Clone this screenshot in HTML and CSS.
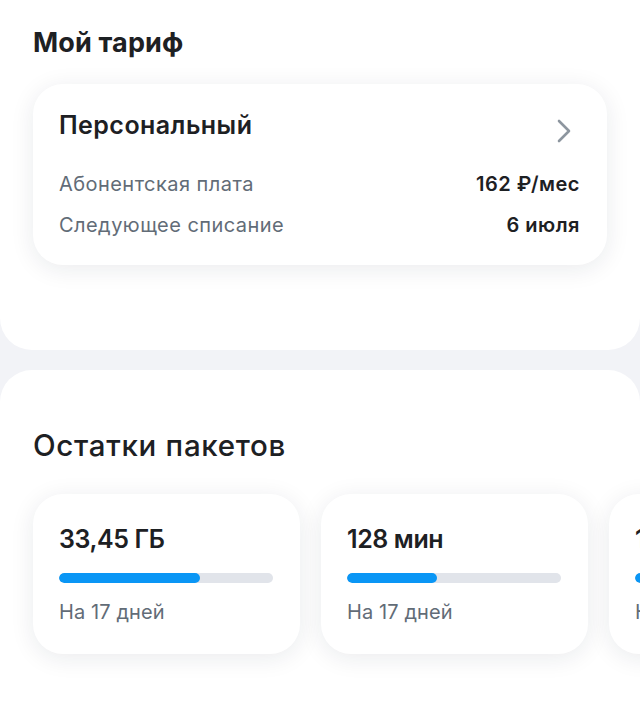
FILE: index.html
```html
<!DOCTYPE html>
<html lang="ru">
<head>
<meta charset="utf-8">
<title>Мой тариф</title>
<link rel="stylesheet" href="styles.css">
</head>
<body>
<section class="panel panel-top">
  <h2 class="heading heading-tariff">Мой тариф</h2>
  <div class="card tariff-card">
    <div class="tariff-head">
      <span class="tariff-name">Персональный</span>
      <svg class="chevron" width="16" height="24" viewBox="0 0 16 24" aria-hidden="true">
        <path d="M3 2 L13 12 L3 22" fill="none" stroke="#8d969f" stroke-width="2.6" stroke-linecap="round" stroke-linejoin="round"/>
      </svg>
    </div>
    <div class="tariff-row">
      <span class="row-label">Абонентская плата</span>
      <span class="row-value">162 ₽/мес</span>
    </div>
    <div class="tariff-row tariff-row-second">
      <span class="row-label">Следующее списание</span>
      <span class="row-value">6 июля</span>
    </div>
  </div>
</section>
<section class="panel panel-bottom">
  <h2 class="heading heading-packages">Остатки пакетов</h2>
  <div class="packages">
    <div class="card package">
      <div class="package-amount">33,45 ГБ</div>
      <div class="bar"><div class="bar-fill" style="width:66%"></div></div>
      <div class="package-term">На 17 дней</div>
    </div>
    <div class="card package">
      <div class="package-amount">128 мин</div>
      <div class="bar"><div class="bar-fill" style="width:42%"></div></div>
      <div class="package-term">На 17 дней</div>
    </div>
    <div class="card package">
      <div class="package-amount">100 SMS</div>
      <div class="bar"><div class="bar-fill" style="width:80%"></div></div>
      <div class="package-term">На 17 дней</div>
    </div>
  </div>
</section>
</body>
</html>
```
FILE: styles.css
```css
* { box-sizing: border-box; }
html, body { margin: 0; padding: 0; }
body {
  background: #f2f3f7;
  font-family: Inter, Roboto, "Noto Sans", "DejaVu Sans", sans-serif;
  color: #1d2023;
  width: 640px;
  min-height: 714px;
  overflow: hidden;
}
.panel {
  background: #ffffff;
  overflow: hidden;
}
.panel-top {
  height: 350px;
  border-radius: 0 0 32px 32px;
  padding: 27px 33px 0 33px;
}
.panel-bottom {
  margin-top: 20px;
  min-height: 344px;
  border-radius: 32px 32px 0 0;
  padding: 58px 0 0 0;
}
.heading {
  margin: 0;
  font-weight: 700;
}
.heading-tariff {
  font-size: 27px;
  line-height: 32px;
  letter-spacing: 0.15px;
}
.heading-packages {
  font-size: 29.5px;
  line-height: 34px;
  font-weight: 500;
  letter-spacing: 0.7px;
  padding: 0 33px;
}
.card {
  background: #ffffff;
  border-radius: 30px;
  box-shadow: 0 4px 24px rgba(20, 30, 50, 0.09);
}
.tariff-card {
  margin-top: 25px;
  height: 181px;
  padding: 27px 27px 0 26px;
}
.tariff-head {
  display: flex;
  justify-content: space-between;
  align-items: flex-start;
  height: 28px;
}
.tariff-name {
  font-size: 25px;
  line-height: 28px;
  font-weight: 600;
  letter-spacing: 0.45px;
}
.chevron {
  margin-top: 8px;
  margin-right: 8px;
}
.tariff-row {
  display: flex;
  justify-content: space-between;
  font-size: 20px;
  line-height: 24px;
  margin-top: 33px;
  letter-spacing: 0.45px;
}
.tariff-row-second {
  margin-top: 17px;
}
.row-label {
  color: #626c77;
}
.row-value {
  font-weight: 600;
  letter-spacing: 0.5px;
}
.packages {
  display: flex;
  gap: 21px;
  margin-top: 32px;
  padding: 0 33px 40px 33px;
}
.package {
  flex: 0 0 267px;
  height: 160px;
  padding: 30px 27px 0 26px;
}
.package-amount {
  font-size: 25px;
  line-height: 30px;
  font-weight: 600;
  letter-spacing: -0.4px;
}
.bar {
  margin-top: 19px;
  height: 10px;
  border-radius: 5px;
  background: #e1e4ea;
  overflow: hidden;
}
.bar-fill {
  height: 100%;
  border-radius: 5px;
  background: #0a96f5;
}
.package-term {
  margin-top: 17px;
  font-size: 20px;
  line-height: 24px;
  letter-spacing: 0.1px;
  color: #626c77;
}
```
